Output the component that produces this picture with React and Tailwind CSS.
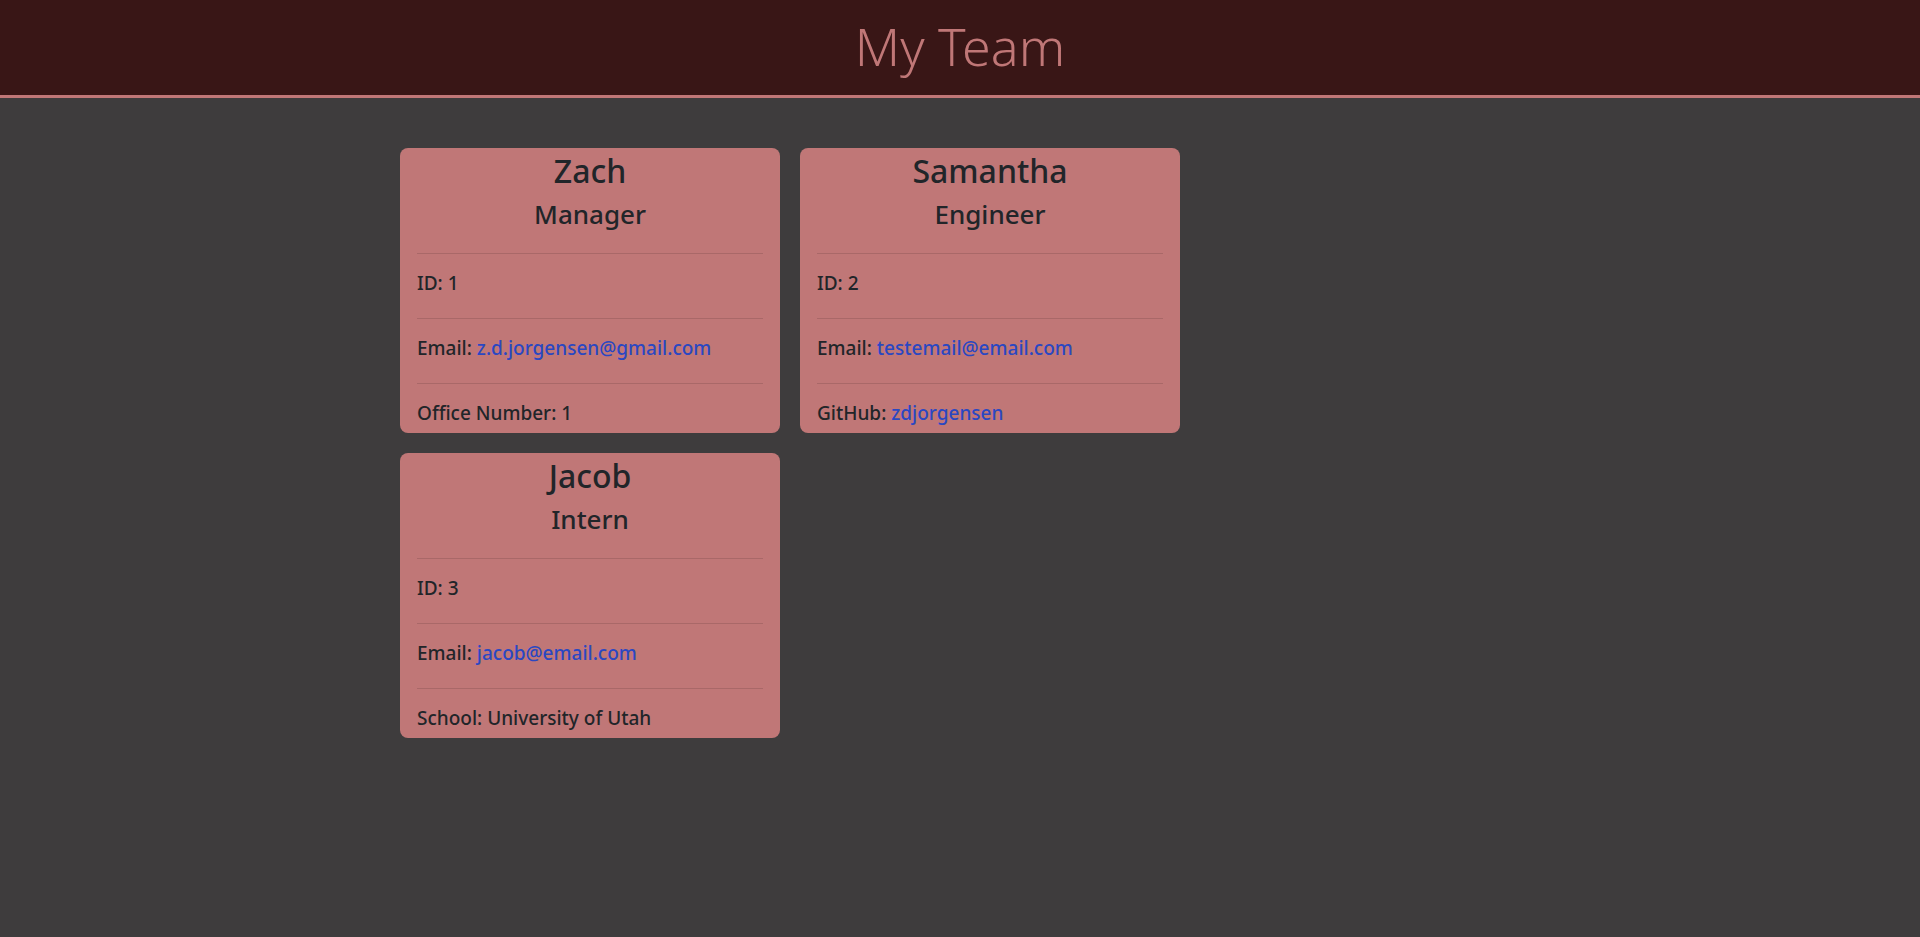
import React from 'react'

const team = [
  {
    name: 'Zach',
    role: 'Manager',
    id: 1,
    email: 'z.d.jorgensen@gmail.com',
    extra: { label: 'Office Number', value: '1' },
  },
  {
    name: 'Samantha',
    role: 'Engineer',
    id: 2,
    email: 'testemail@email.com',
    extra: { label: 'GitHub', value: 'zdjorgensen', link: true },
  },
  {
    name: 'Jacob',
    role: 'Intern',
    id: 3,
    email: 'jacob@email.com',
    extra: { label: 'School', value: 'University of Utah' },
  },
]

const EmployeeCard = ({ person }) => {
  return (
    <div className="w-[380px] h-[285px] overflow-hidden rounded-[8px] bg-[#c07777] text-[#212529] px-[17px] pt-[4px]">
      {/* Card header */}
      <div className="text-center">
        <h2 className="text-[32px] leading-[1.2] font-medium">{person.name}</h2>
        <h3 className="text-[26px] leading-[1.2] font-medium mt-[9px]">{person.role}</h3>
      </div>

      {/* Details */}
      <ul className="mt-[22px] text-[19px] font-medium">
        <li className="border-t border-[#a96868] h-[65px] pb-[5px] flex items-center">ID: {person.id}</li>
        <li className="border-t border-[#a96868] h-[65px] pb-[5px] flex items-center">
          <span>
            Email: <a href={`mailto:${person.email}`} className="text-[#2a47c2]">{person.email}</a>
          </span>
        </li>
        <li className="border-t border-[#a96868] h-[65px] pb-[5px] flex items-center">
          <span>
            {person.extra.label}:{' '}
            {person.extra.link ? (
              <a href="#" className="text-[#2a47c2]">{person.extra.value}</a>
            ) : (
              person.extra.value
            )}
          </span>
        </li>
      </ul>
    </div>
  )
}

const App = () => {
  return (
    <div className="min-h-screen bg-[#3e3c3d] font-['Segoe_UI','Noto_Sans',sans-serif]">
      {/* Header */}
      <header className="h-[98px] bg-[#391616] border-b-[3px] border-[#c07777] flex items-center justify-center">
        <h1 className="text-[52px] font-light leading-none text-[#c07777] -mt-[4px]">My Team</h1>
      </header>

      {/* Team cards */}
      <main className="max-w-[1140px] mx-auto px-[10px] pt-[50px]">
        <div className="flex flex-wrap gap-[20px]">
          {team.map((person) => (
            <EmployeeCard key={person.id} person={person} />
          ))}
        </div>
      </main>
    </div>
  )
}

export default App
